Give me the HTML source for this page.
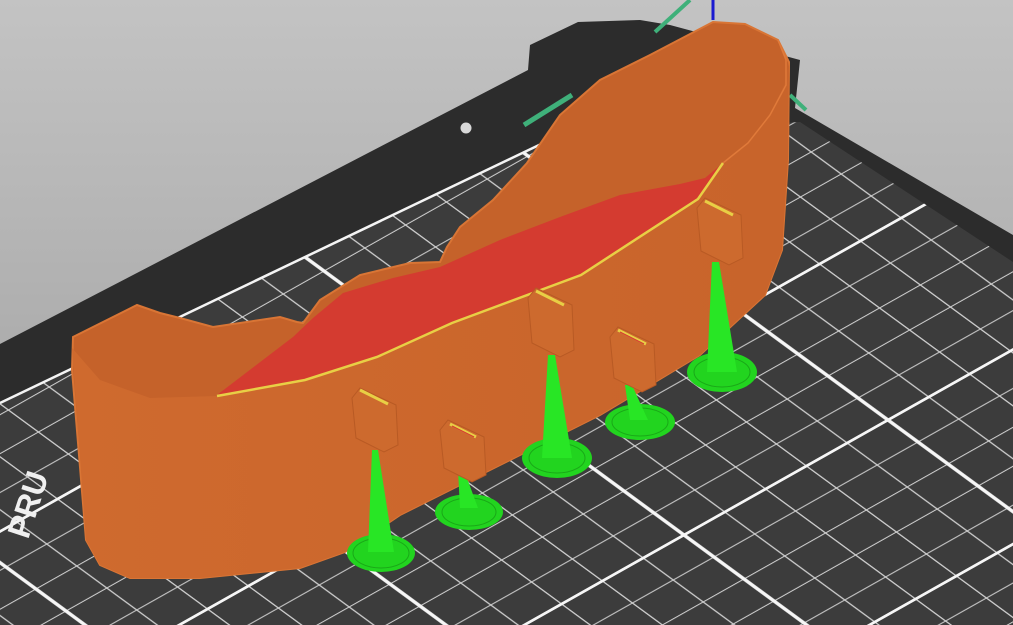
<!DOCTYPE html>
<html><head><meta charset="utf-8"><style>
html,body{margin:0;padding:0;width:1013px;height:625px;overflow:hidden;background:#b0b0b0}
svg{display:block}
</style></head><body>
<svg width="1013" height="625" viewBox="0 0 1013 625" xmlns="http://www.w3.org/2000/svg">
<defs>
<linearGradient id="bg" x1="0" y1="0" x2="0" y2="1">
<stop offset="0" stop-color="#c3c3c3"/><stop offset="1" stop-color="#9c9c9c"/>
</linearGradient>
<pattern id="grid" patternUnits="userSpaceOnUse" width="5" height="5" patternTransform="matrix(40.8 -23 30 22 888 420)">
<rect x="-1" y="-1" width="7" height="7" fill="#3c3c3c"/>
<g stroke="#d0d0d0" stroke-width="0.03">
<line x1="1" y1="0" x2="1" y2="5"/><line x1="2" y1="0" x2="2" y2="5"/><line x1="3" y1="0" x2="3" y2="5"/><line x1="4" y1="0" x2="4" y2="5"/>
<line x1="0" y1="1" x2="5" y2="1"/><line x1="0" y1="2" x2="5" y2="2"/><line x1="0" y1="3" x2="5" y2="3"/><line x1="0" y1="4" x2="5" y2="4"/>
</g>
<g stroke="#f6f6f6" stroke-width="0.08">
<line x1="0" y1="-1" x2="0" y2="6"/><line x1="5" y1="-1" x2="5" y2="6"/><line x1="-1" y1="0" x2="6" y2="0"/><line x1="-1" y1="5" x2="6" y2="5"/>
</g>
</pattern>
<linearGradient id="face" x1="0" y1="0" x2="1" y2="0">
<stop offset="0" stop-color="#cf6a2e"/><stop offset="1" stop-color="#c8642b"/>
</linearGradient>
</defs>
<rect width="1013" height="625" fill="url(#bg)"/>
<polygon points="0,344 528,70 530,45 578,22 640,20 670,25 800,60 795,108 1013,235 1013,625 0,625" fill="#2c2c2c"/>
<polygon points="0,403 560,135 800,122 1013,262 1013,625 0,625" fill="url(#grid)"/>
<line x1="0" y1="403" x2="560" y2="135" stroke="#f4f4f4" stroke-width="2.5"/>
<circle cx="466" cy="128" r="5.5" fill="#d8d8d8"/>
<text x="0" y="0" transform="translate(28,540) rotate(-72)" font-family="Liberation Sans, sans-serif" font-weight="bold" font-size="32" fill="#f0f0f0">PRU</text>
<line x1="655" y1="32" x2="690" y2="0" stroke="#3fb07a" stroke-width="4"/>
<line x1="524" y1="125" x2="572" y2="95" stroke="#3fb07a" stroke-width="5"/>
<line x1="713" y1="0" x2="713" y2="20" stroke="#1a1ad0" stroke-width="3"/>
<line x1="790" y1="95" x2="806" y2="110" stroke="#3fb07a" stroke-width="4"/>
<polygon points="73,337 137,305 160,313 180,318 213,327 280,317 297,322 303,323 320,300 360,275 410,263 440,262 447,247 460,227 493,200 527,163 560,115 600,80 650,55 713,22 745,24 778,40 789,62 788,160 782,250 765,295 700,355 600,415 500,465 400,515 345,552 300,568 200,578 130,578 100,565 86,540 72,370" fill="#c5622a" stroke="#d97535" stroke-width="2"/>
<polygon points="217,395 293,337 313,318 343,293 393,278 440,267 500,240 560,217 620,195 680,184 705,178 723,163 698,199 581,275 452,323 377,357 305,380" fill="#d43b30"/>
<polygon points="72,348 100,380 150,398 217,396 305,380 377,357 452,323 581,275 698,199 723,163 748,143 770,115 784,85 789,62 788,160 782,250 765,295 700,355 600,415 500,465 400,515 345,552 300,568 200,578 130,578 100,565 86,540" fill="url(#face)"/>
<polyline points="217,396 305,380 377,357 452,323 581,275 698,199 723,163" fill="none" stroke="#e8cf45" stroke-width="2.5"/>
<polyline points="778,40 786,60 786,85 770,115 748,143 723,163" fill="none" stroke="#e07a3a" stroke-width="1.5"/>
<g>
<ellipse cx="381" cy="553" rx="34" ry="19" fill="#22d41f"/><ellipse cx="381" cy="553" rx="28" ry="15" fill="none" stroke="#1aa818" stroke-width="1"/>
<polygon points="372,450 378,450 394,552 368,552" fill="#28e625"/>
<ellipse cx="469" cy="512" rx="34" ry="18" fill="#22d41f"/><ellipse cx="469" cy="512" rx="27" ry="14" fill="none" stroke="#1aa818" stroke-width="1"/>
<polygon points="458,470 464,470 478,508 460,508" fill="#28e625"/>
<ellipse cx="557" cy="458" rx="35" ry="20" fill="#22d41f"/><ellipse cx="557" cy="458" rx="28" ry="15" fill="none" stroke="#1aa818" stroke-width="1"/>
<polygon points="548,355 555,355 572,458 542,458" fill="#28e625"/>
<ellipse cx="640" cy="422" rx="35" ry="18" fill="#22d41f"/><ellipse cx="640" cy="422" rx="28" ry="14" fill="none" stroke="#1aa818" stroke-width="1"/>
<polygon points="625,385 632,385 648,420 630,420" fill="#28e625"/>
<ellipse cx="722" cy="372" rx="35" ry="20" fill="#22d41f"/><ellipse cx="722" cy="372" rx="28" ry="15" fill="none" stroke="#1aa818" stroke-width="1"/>
<polygon points="712,262 719,262 737,372 707,372" fill="#28e625"/>
</g>
<g fill="#cd6a2e" stroke="#b85a24" stroke-width="1">
<polygon points="352,398 360,388 396,405 398,445 384,452 356,438"/>
<polygon points="440,430 448,420 484,437 486,475 472,482 444,468"/>
<polygon points="528,298 536,288 572,305 574,350 560,357 532,343"/>
<polygon points="610,337 618,327 654,344 656,385 642,392 614,378"/>
<polygon points="697,208 705,198 741,215 743,258 729,265 701,251"/>
</g>
<g stroke="#e8cf45" stroke-width="3">
<line x1="360" y1="390" x2="388" y2="404"/>
<line x1="450" y1="424" x2="476" y2="437"/>
<line x1="536" y1="291" x2="564" y2="305"/>
<line x1="618" y1="330" x2="646" y2="344"/>
<line x1="705" y1="201" x2="733" y2="215"/>
</g>
<g stroke="#d43b30" stroke-width="1.2">
<line x1="452" y1="426" x2="474" y2="437"/>
<line x1="620" y1="332" x2="644" y2="344"/>
</g>
</svg>
</body></html>
